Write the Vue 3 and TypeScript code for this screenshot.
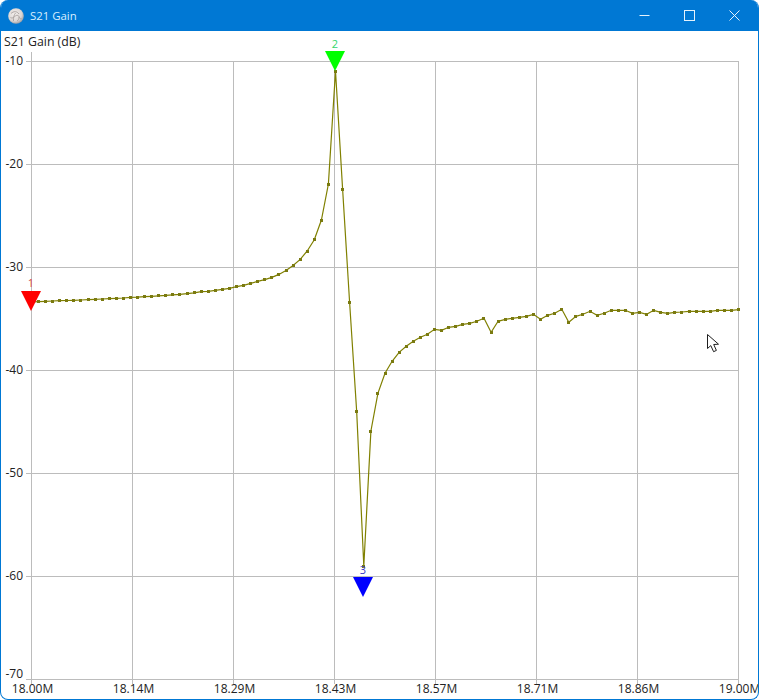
<script setup lang="ts">
const plotLeft = 31
const plotTop = 61
const plotBottom = 679
const gridStepX = 101
const gridStepY = 103
const traceSpan = 707

const xLabels = ['18.00M', '18.14M', '18.29M', '18.43M', '18.57M', '18.71M', '18.86M', '19.00M']
const yLabels = [-10, -20, -30, -40, -50, -60, -70]

const xTicks = xLabels.map((text, i) => ({
  text,
  x: plotLeft + gridStepX * i,
}))
const plotRight = xTicks[xTicks.length - 1].x
const yTicks = yLabels.map((value, i) => ({
  value,
  y: plotTop + gridStepY * i,
  labelY: i === yLabels.length - 1 ? 678 : plotTop + gridStepY * i + 4,
}))

const traceY = [
  302, 301.7, 301.3, 301, 300.7, 300.5, 300.3, 300, 299.6, 299.3,
  299, 298.7, 298.3, 298, 297.4, 297.2, 296.7, 296.3, 295.8, 295.4,
  294.8, 294.3, 293.6, 292.8, 291.7, 291.3, 290.4, 289.4, 288.4, 286.6,
  285.4, 283.4, 281.4, 279.6, 277.4, 274.4, 270.4, 265.4, 259.4, 251,
  239.7, 220, 184, 71, 189, 302.3, 411.7, 566, 431, 393.3,
  373.3, 361.3, 352.3, 346.3, 341.3, 337.3, 334.3, 329.3, 330.3, 327.3,
  326.3, 324.3, 323.3, 321.3, 318.3, 332.3, 321.3, 319.3, 318.3, 317.3,
  316.3, 314.3, 319.3, 315.3, 313.3, 309.3, 322.3, 316.3, 314.3, 311.3,
  315.3, 313.3, 310.3, 310.3, 310.3, 313.3, 312.3, 314.3, 310.3, 312.3,
  313.3, 312.3, 312, 311.3, 311.3, 311.3, 311.3, 310.3, 310.3, 310.3,
  309.7,
]
const tracePoints = traceY.map((y, i) => ({
  x: plotLeft + 0.5 + (traceSpan * i) / (traceY.length - 1),
  y,
}))
const tracePath = tracePoints.map((p) => `${p.x.toFixed(1)},${p.y}`).join(' ')

const markers = [
  { id: 1, x: 31, top: 291, color: '#ff0000', label: '#d04a4a', labelY: 287 },
  { id: 2, x: 335, top: 51, color: '#00ff00', label: '#35d66a', labelY: 48 },
  { id: 3, x: 363, top: 577, color: '#0000ff', label: '#3c3cc8', labelY: 574 },
]
const markerShape = (x: number, top: number) =>
  `${x - 10},${top} ${x + 10},${top} ${x},${top + 20}`
</script>

<template>
  <div class="window">
    <header class="titlebar">
      <svg class="app-icon" viewBox="0 0 16 16" aria-hidden="true">
        <defs>
          <radialGradient id="appGlow" cx="42%" cy="38%" r="68%">
            <stop offset="0%" stop-color="#f4f0ee" />
            <stop offset="65%" stop-color="#dcd6d4" />
            <stop offset="100%" stop-color="#8d9098" />
          </radialGradient>
        </defs>
        <circle cx="8" cy="8" r="7.8" fill="url(#appGlow)" />
        <path d="M3 5.5c2.5-2.5 6-2.5 8 .5M2.5 9.5c3 2 5-3.5 7.5-2s1 4 3.5 3M5.5 13c-.5-3 .5-6 2-8M9 13c1.5-1 2-2 2-4" fill="none" stroke="#a8a09e" stroke-width=".9" />
      </svg>
      <span class="title">S21 Gain</span>
      <div class="controls">
        <button class="control" aria-label="Minimize">
          <svg width="11" height="11" viewBox="0 0 11 11"><path d="M0.5 5.5H10.5" /></svg>
        </button>
        <button class="control" aria-label="Maximize">
          <svg width="11" height="11" viewBox="0 0 11 11"><rect x="0.5" y="0.5" width="10" height="10" /></svg>
        </button>
        <button class="control" aria-label="Close">
          <svg width="11" height="11" viewBox="0 0 11 11"><path d="M0.5 0.5L10.5 10.5M10.5 0.5L0.5 10.5" /></svg>
        </button>
      </div>
    </header>

    <main class="client">
      <svg class="chart" viewBox="1 31 757 668" width="757" height="668">
        <text class="heading" x="4" y="46">S21 Gain (dB)</text>

        <g class="grid">
          <line
            v-for="(tick, i) in xTicks"
            :key="tick.text"
            :x1="tick.x + 0.5"
            :x2="tick.x + 0.5"
            :y1="i === 0 ? 52 : plotTop"
            :y2="plotBottom + 5"
          />
          <line
            v-for="tick in yTicks"
            :key="tick.value"
            :x1="plotLeft - 5"
            :x2="plotRight + 1"
            :y1="tick.y + 0.5"
            :y2="tick.y + 0.5"
          />
        </g>

        <text v-for="tick in yTicks" :key="tick.value" class="tick" text-anchor="end" x="23" :y="tick.labelY">{{ tick.value }}</text>
        <text v-for="tick in xTicks" :key="tick.text" class="tick" text-anchor="middle" :x="tick.x + 1.5" y="693">{{ tick.text }}</text>

        <polyline class="trace" :points="tracePath" />
        <rect
          v-for="p in tracePoints"
          :key="p.x"
          class="dot"
          :x="Math.round(p.x - 1.5)"
          :y="Math.round(p.y - 1.5)"
          width="3"
          height="3"
        />

        <g v-for="m in markers" :key="m.id">
          <polygon :points="markerShape(m.x, m.top)" :fill="m.color" />
          <text class="marker-label" text-anchor="middle" :x="m.x" :y="m.labelY" :fill="m.label">{{ m.id }}</text>
        </g>

        <path
          class="cursor"
          d="M707.5 334.5V348.5L710.8 345.6L713.6 351.7L716.4 350.4L713.7 344.5L718.5 344.2Z"
        />
      </svg>
    </main>
  </div>
</template>

<style scoped>
.window {
  width: 759px;
  height: 700px;
  box-sizing: border-box;
  display: flex;
  flex-direction: column;
  background: #ffffff;
  border: 1px solid #0078d4;
  border-top: 0;
  border-radius: 8px;
  overflow: hidden;
  font-family: "Open Sans", "Noto Sans", sans-serif;
}
.titlebar {
  flex: none;
  height: 31px;
  display: flex;
  align-items: center;
  margin: 0 -1px;
  padding-left: 8px;
  padding-right: 2px;
  background: #0078d4;
}
.app-icon {
  width: 16px;
  height: 16px;
  flex: none;
}
.title {
  margin-left: 6px;
  font-size: 11.4px;
  color: #d8eeff;
}
.controls {
  display: flex;
  margin-left: auto;
  height: 100%;
}
.control {
  width: 45px;
  height: 100%;
  padding: 0;
  border: 0;
  background: transparent;
  display: flex;
  align-items: center;
  justify-content: center;
}
.control svg {
  fill: none;
  stroke: #e4f2fc;
  stroke-width: 1;
}
.client {
  flex: 1;
  min-height: 0;
}
.chart {
  display: block;
}
.heading {
  font-size: 12.3px;
  fill: #222222;
}
.tick {
  font-size: 12px;
  fill: #222222;
}
.grid line {
  stroke: #bcbcbc;
  stroke-width: 1;
}
.trace {
  fill: none;
  stroke: #808000;
  stroke-width: 1.2;
}
.dot {
  fill: #7a7a10;
  shape-rendering: crispEdges;
}
.marker-label {
  font-size: 11px;
}
.cursor {
  fill: #ffffff;
  stroke: #1e1e1e;
  stroke-width: 1;
}
</style>
